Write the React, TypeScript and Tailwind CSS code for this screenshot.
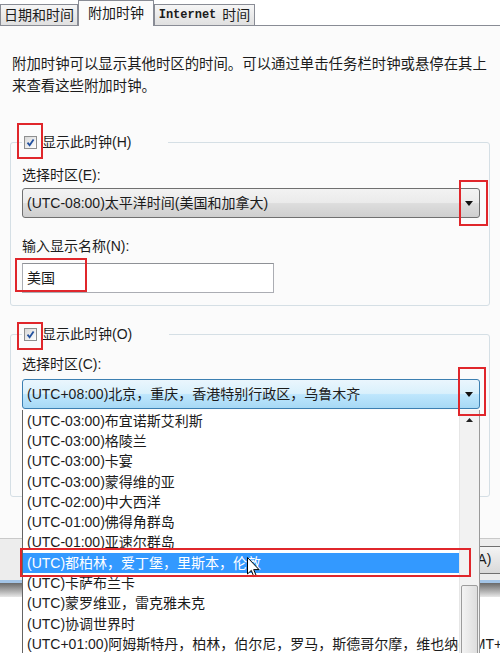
import React from 'react'

const rows = [
  '(UTC-03:00)布宜诺斯艾利斯',
  '(UTC-03:00)格陵兰',
  '(UTC-03:00)卡宴',
  '(UTC-03:00)蒙得维的亚',
  '(UTC-02:00)中大西洋',
  '(UTC-01:00)佛得角群岛',
  '(UTC-01:00)亚速尔群岛',
  '(UTC)都柏林，爱丁堡，里斯本，伦敦',
  '(UTC)卡萨布兰卡',
  '(UTC)蒙罗维亚，雷克雅未克',
  '(UTC)协调世界时',
  '(UTC+01:00)阿姆斯特丹，柏林，伯尔尼，罗马，斯德哥尔摩，维也纳(GMT+01:00)',
]

function CheckBox() {
  return (
    <span className="flex h-[13px] w-[13px] items-center justify-center border border-[#8e8f8f] bg-linear-to-br from-[#d8d8d8] to-[#ffffff]">
      <svg width="9" height="9" viewBox="0 0 9 9">
        <path d="M1.5 4.6 L3.6 7.2 L7.6 1.4" stroke="#23519f" strokeWidth="1.8" fill="none" />
      </svg>
    </span>
  )
}

function Legend({ label }: { label: string }) {
  return (
    <legend className="pl-[2px] pr-[37px]">
      <span className="flex h-[20px] items-center gap-[5px] text-[14px] leading-[20px]">
        <CheckBox />
        {label}
      </span>
    </legend>
  )
}

function Combo({ text, active }: { text: string; active?: boolean }) {
  return (
    <div
      className={
        active
          ? 'mt-[5px] flex h-[30px] items-center justify-between rounded-[3px] border border-[#3c7fb1] bg-[linear-gradient(to_bottom,#eaf6fd_0%,#d9f0fc_48%,#bee6fd_52%,#a7d9f5_100%)] pl-[4px] pr-[6px]'
          : 'mt-[3px] flex h-[30px] items-center justify-between rounded-[3px] border border-[#707070] bg-[linear-gradient(to_bottom,#f2f2f2_0%,#ebebeb_48%,#dddddd_52%,#cfcfcf_100%)] pl-[4px] pr-[6px]'
      }
    >
      <span className="whitespace-nowrap text-[14px] leading-[20px]">{text}</span>
      <svg width="8" height="5" viewBox="0 0 8 5">
        <path d="M0 0 H8 L4 5 Z" fill="#111" />
      </svg>
    </div>
  )
}

function RedBox({ className }: { className: string }) {
  return <div className={`pointer-events-none absolute border-2 border-[#e0262b] ${className}`} />
}

export default function App() {
  return (
    <div className="relative h-[653px] w-[500px] overflow-hidden bg-[#fbfbfb] font-['Liberation_Sans','Noto_Sans_CJK_SC',sans-serif] text-[#1b1b1b]">
      {/* tabs */}
      <div className="flex h-[26px] items-end border-b border-[#898c95] bg-white text-[14px]">
        <div className="flex h-[21px] w-[78px] items-center justify-center border border-b-0 border-[#898c95] bg-linear-to-b from-[#f6f6f6] to-[#e0e0e0] leading-[20px]">
          日期和时间
        </div>
        <div className="relative z-10 -mb-px flex h-[26px] w-[76px] items-center justify-center border border-b-0 border-[#898c95] bg-[#fbfbfb] pb-[2px] leading-[20px]">
          附加时钟
        </div>
        <div className="flex h-[21px] w-[101px] items-center justify-center border border-b-0 border-[#898c95] bg-linear-to-b from-[#f6f6f6] to-[#e0e0e0] leading-[20px]">
          <span className="font-['Liberation_Mono',monospace] text-[12px] font-bold">Internet</span>
          <span className="ml-[6px]">时间</span>
        </div>
      </div>

      <p className="mt-[27px] whitespace-nowrap px-[12px] text-[14.4px] leading-[22px]">
        附加时钟可以显示其他时区的时间。可以通过单击任务栏时钟或悬停在其上
        <br />
        来查看这些附加时钟。
      </p>

      {/* clock 1 */}
      <fieldset className="mx-[10px] mt-[35px] rounded-[3px] border border-[#d5dfe5] pb-[12px] pl-[11px] pr-[9px]">
        <Legend label="显示此时钟(H)" />
        <div className="mt-[13px] text-[14px] leading-[20px]">选择时区(E):</div>
        <Combo text="(UTC-08:00)太平洋时间(美国和加拿大)" />
        <div className="mt-[18px] text-[14px] leading-[20px]">输入显示名称(N):</div>
        <div className="mt-[7px] flex h-[30px] w-[252px] items-center border border-[#abadb3] border-t-[#8e9196] bg-white pl-[4px] text-[14px] leading-[20px]">
          美国
        </div>
      </fieldset>

      {/* clock 2 */}
      <fieldset className="mx-[10px] mt-[18px] rounded-[3px] border border-[#d5dfe5] pb-[87px] pl-[11px] pr-[9px]">
        <Legend label="显示此时钟(O)" />
        <div className="mt-[10px] text-[14px] leading-[20px]">选择时区(C):</div>
        <Combo text="(UTC+08:00)北京，重庆，香港特别行政区，乌鲁木齐" active />
      </fieldset>

      {/* dialog buttons strip behind the list */}
      <div className="mt-[41px] flex h-[42px] items-center justify-end border-t border-[#c9c9c9] bg-[#ededed]">
        <div className="-mr-[8px] flex h-[28px] w-[80px] items-center justify-center rounded-[3px] border border-[#707070] bg-linear-to-b from-[#f4f4f4] to-[#d9d9d9] text-[14px]">
          应用(A)
        </div>
      </div>
      <div className="h-[3px] bg-[#a3c4e6]" />
      <div className="h-[14px] bg-linear-to-b from-[#6a6a6a] to-[#e8e8e8]" />
      <div className="h-[60px] bg-white" />

      {/* open dropdown list */}
      <div className="absolute left-[22px] top-[410px] z-20 h-[260px] w-[458px] border-l border-[#646464] bg-white pt-[1px] pr-[21px] text-[14px]">
        {rows.map((r, i) => (
          <div
            key={r}
            className={
              i === 7
                ? 'flex h-[20.3px] items-center whitespace-nowrap bg-[#3399ff] pl-[4px] text-white'
                : 'flex h-[20.3px] items-center whitespace-nowrap pl-[4px]'
            }
          >
            {r}
          </div>
        ))}
        <div className="absolute bottom-0 right-0 top-0 z-30 w-[21px] border-l border-[#e6e6e6] border-r border-r-[#9a9a9a] bg-[#f2f2f2]">
          <div className="flex h-[20px] items-center justify-center">
            <svg width="7" height="4" viewBox="0 0 7 4">
              <path d="M0 4 H7 L3.5 0 Z" fill="#222" />
            </svg>
          </div>
          <div className="absolute left-[1px] right-[1px] top-[175px] h-[120px] rounded-[2px] border border-[#9c9c9c] bg-linear-to-r from-[#f3f3f3] to-[#dedede]" />
        </div>
      </div>

      {/* mouse pointer */}
      <svg className="absolute left-[247px] top-[557px] z-40" width="13" height="21" viewBox="0 0 13 21">
        <path d="M0.5 0.5 V17 L4.3 13.4 L6.8 19.6 L9.2 18.6 L6.7 12.6 H12 Z" fill="#fff" stroke="#000" strokeWidth="1" />
      </svg>

      {/* annotations */}
      <RedBox className="left-[17px] top-[123px] z-40 h-[36px] w-[26px]" />
      <RedBox className="left-[459px] top-[180px] z-40 h-[46px] w-[29px]" />
      <RedBox className="left-[15px] top-[258px] z-40 h-[34px] w-[72px]" />
      <RedBox className="left-[17px] top-[322px] z-40 h-[28px] w-[26px]" />
      <RedBox className="left-[458px] top-[367px] z-40 h-[49px] w-[28px]" />
      <RedBox className="left-[20px] top-[548px] z-40 h-[29px] w-[451px]" />
    </div>
  )
}
